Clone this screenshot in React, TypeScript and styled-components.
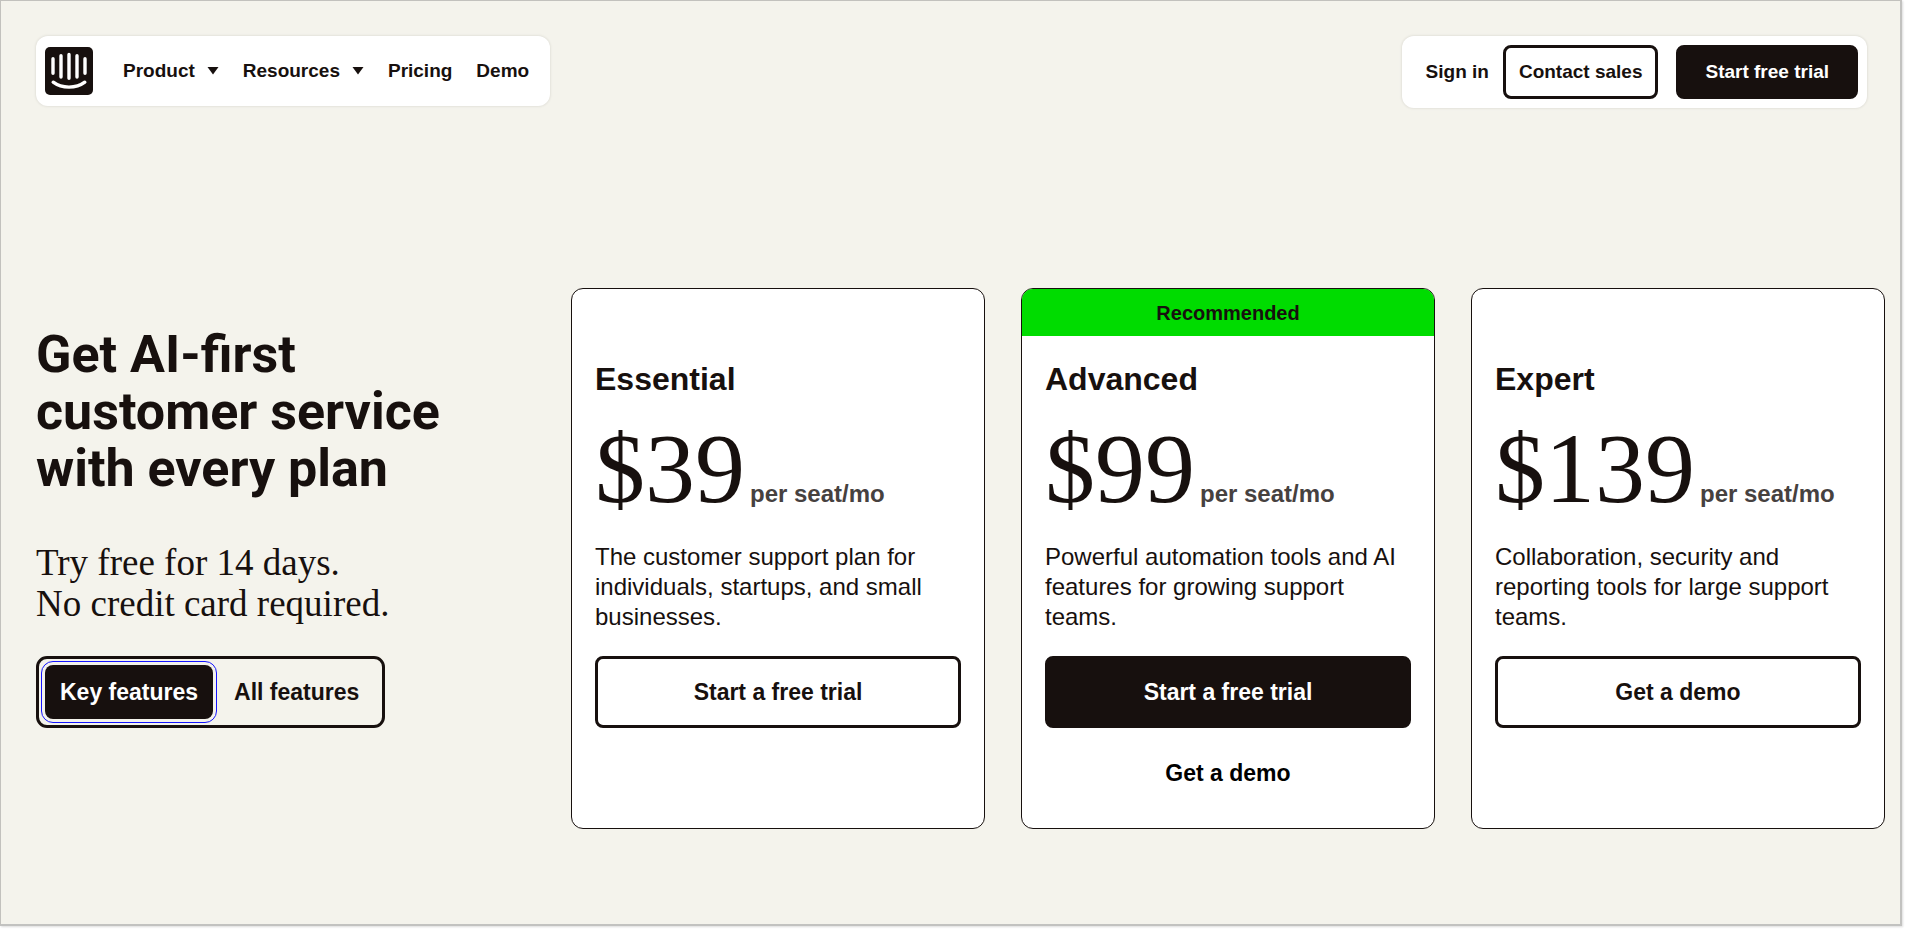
import React, { useState } from "react";
import styled, { createGlobalStyle, css } from "styled-components";

const ink = "#17100e";
const sand = "#f4f3ec";
const sans = `"Liberation Sans", Arial, Helvetica, sans-serif`;
const serif = `"Liberation Serif", "Times New Roman", serif`;

const GlobalStyle = createGlobalStyle`
  * {
    box-sizing: border-box;
  }

  body {
    margin: 0;
    background: #ffffff;
    color: ${ink};
    font-family: ${sans};
  }

  button {
    margin: 0;
    font-family: inherit;
    cursor: pointer;
  }

  h1, h2, p {
    margin: 0;
  }
`;

const Page = styled.div`
  display: flex;
  min-height: 100vh;
  padding: 0 3px 3px 0;
`;

const Frame = styled.div`
  flex: 1;
  min-width: 0;
  background: ${sand};
  border: 1px solid #c2c1bd;
  border-right: 2px solid #c2c2c0;
  border-bottom: 2px solid #c2c2c0;
  box-shadow: 1px 1px 2px #dcdcdc;
`;

const Header = styled.header`
  display: flex;
  justify-content: space-between;
  align-items: flex-start;
  padding: 35px 33px 0 35px;
`;

const panel = css`
  display: flex;
  align-items: center;
  background: #ffffff;
  border-radius: 12px;
  box-shadow: 0 0 2px 1px #e4e3dc;
`;

const MainNav = styled.nav`
  ${panel}
  height: 70px;
  padding: 0 21px 0 9px;
`;

const LogoLink = styled.a`
  display: flex;
  margin-right: 30px;
`;

const NavList = styled.ul`
  display: flex;
  gap: 24px;
  margin: 0;
  padding: 0;
  list-style: none;
`;

const navText = css`
  color: ${ink};
  font-size: 19px;
  font-weight: 700;
  line-height: 24px;
  text-decoration: none;
  white-space: nowrap;
`;

const NavLink = styled.a`
  ${navText}
  display: block;
`;

const NavMenuButton = styled.button`
  ${navText}
  display: flex;
  align-items: center;
  gap: 12px;
  padding: 0;
  border: 0;
  background: none;
`;

const Account = styled.div`
  ${panel}
  height: 72px;
  padding: 0 9px 0 24px;
`;

const HeaderButton = styled.button<{ $filled?: boolean }>`
  ${navText}
  height: 54px;
  margin-left: ${(p) => (p.$filled ? 18 : 14)}px;
  padding: 0 ${(p) => (p.$filled ? 26 : 13)}px;
  border: 3px solid ${ink};
  border-radius: 8px;
  background: ${(p) => (p.$filled ? ink : "#ffffff")};
  color: ${(p) => (p.$filled ? "#ffffff" : ink)};
`;

const Pricing = styled.main`
  display: grid;
  grid-template-columns: 499px repeat(3, minmax(0, 1fr));
  gap: 36px;
  padding: 180px 15px 36px 35px;
`;

const Intro = styled.section`
  padding-top: 38px;
`;

const Headline = styled.h1`
  font-family: Roboto, ${sans};
  font-size: 52px;
  font-weight: 700;
  line-height: 57px;
`;

const Tagline = styled.p`
  margin-top: 45px;
  font-family: ${serif};
  font-size: 37px;
  line-height: 41px;
`;

const Toggle = styled.div`
  display: inline-flex;
  margin-top: 32px;
  padding: 6px;
  border: 3px solid ${ink};
  border-radius: 11px;
`;

const ToggleButton = styled.button<{ $active: boolean }>`
  height: 54px;
  padding: ${(p) => (p.$active ? "0 15px" : "0 17px 0 21px")};
  border: 0;
  border-radius: 8px;
  background: ${(p) => (p.$active ? ink : "transparent")};
  color: ${(p) => (p.$active ? "#ffffff" : ink)};
  font-size: 23px;
  font-weight: 700;
  white-space: nowrap;
  outline: ${(p) => (p.$active ? "1px solid #1414ff" : "none")};
  outline-offset: 3px;
`;

const Card = styled.article`
  display: flex;
  flex-direction: column;
  overflow: hidden;
  background: #ffffff;
  border: 1px solid ${ink};
  border-radius: 12px;
`;

const Banner = styled.div`
  height: 47px;
  background: #00dc00;
  font-size: 20px;
  font-weight: 700;
  line-height: 48px;
  text-align: center;
`;

const CardBody = styled.div<{ $hasBanner: boolean }>`
  display: flex;
  flex-direction: column;
  padding: ${(p) => (p.$hasBanner ? 23 : 70)}px 23px 40px;
`;

const PlanName = styled.h2`
  font-size: 32px;
  font-weight: 700;
  line-height: 40px;
`;

const PriceRow = styled.div`
  display: flex;
  align-items: baseline;
  gap: 5px;
  margin-top: 20px;
`;

const Price = styled.span`
  font-family: ${serif};
  font-size: 100px;
  line-height: 100px;
`;

const Unit = styled.span`
  color: #46413f;
  font-size: 24px;
  font-weight: 700;
  line-height: 30px;
`;

const Description = styled.p`
  margin-top: 23px;
  font-size: 24px;
  line-height: 30px;
`;

const PlanButton = styled.button<{ $filled?: boolean }>`
  height: 72px;
  margin-top: 24px;
  border: 3px solid ${ink};
  border-radius: 8px;
  background: ${(p) => (p.$filled ? ink : "#ffffff")};
  color: ${(p) => (p.$filled ? "#ffffff" : ink)};
  font-size: 23px;
  font-weight: 700;
`;

const PlanLink = styled.a`
  margin-top: 30px;
  color: #000000;
  font-size: 23px;
  font-weight: 700;
  line-height: 30px;
  text-align: center;
  text-decoration: none;
`;

function Logo() {
  return (
    <svg width="48" height="48" viewBox="0 0 48 48" aria-hidden="true">
      <rect width="48" height="48" rx="5" fill={ink} />
      <g fill="none" stroke="#ffffff" strokeWidth="3.4" strokeLinecap="round">
        <path d="M8 11.7V26.3M16 8.7V30M24 7.5V31.3M32 8.7V30M40 11.7V26.3" />
        <path d="M8.2 35.2C17 41.8 31 41.8 39.8 35.2" />
      </g>
    </svg>
  );
}

function Caret() {
  return (
    <svg width="12" height="8" viewBox="0 0 12 8" aria-hidden="true">
      <path d="M0.500 0H11.500L6 7.500Z" fill={ink} />
    </svg>
  );
}

type Plan = {
  name: string;
  price: string;
  description: string;
  action: string;
  secondary?: string;
  badge?: string;
};

const plans: Plan[] = [
  {
    name: "Essential",
    price: "$39",
    description: "The customer support plan for individuals, startups, and small businesses.",
    action: "Start a free trial",
  },
  {
    name: "Advanced",
    price: "$99",
    description: "Powerful automation tools and AI features for growing support teams.",
    action: "Start a free trial",
    secondary: "Get a demo",
    badge: "Recommended",
  },
  {
    name: "Expert",
    price: "$139",
    description: "Collaboration, security and reporting tools for large support teams.",
    action: "Get a demo",
  },
];

function PlanCard({ plan }: { plan: Plan }) {
  return (
    <Card>
      {plan.badge && <Banner>{plan.badge}</Banner>}
      <CardBody $hasBanner={Boolean(plan.badge)}>
        <PlanName>{plan.name}</PlanName>
        <PriceRow>
          <Price>{plan.price}</Price>
          <Unit>per seat/mo</Unit>
        </PriceRow>
        <Description>{plan.description}</Description>
        <PlanButton type="button" $filled={Boolean(plan.badge)}>
          {plan.action}
        </PlanButton>
        {plan.secondary && <PlanLink href="#demo">{plan.secondary}</PlanLink>}
      </CardBody>
    </Card>
  );
}

const views = ["Key features", "All features"];

export default function App() {
  const [view, setView] = useState(views[0]);

  return (
    <Page>
      <GlobalStyle />
      <Frame>
        <Header>
          <MainNav>
            <LogoLink href="#home" aria-label="Home">
              <Logo />
            </LogoLink>
            <NavList>
              <li>
                <NavMenuButton type="button">
                  Product
                  <Caret />
                </NavMenuButton>
              </li>
              <li>
                <NavMenuButton type="button">
                  Resources
                  <Caret />
                </NavMenuButton>
              </li>
              <li>
                <NavLink href="#pricing">Pricing</NavLink>
              </li>
              <li>
                <NavLink href="#demo">Demo</NavLink>
              </li>
            </NavList>
          </MainNav>
          <Account>
            <NavLink href="#signin">Sign in</NavLink>
            <HeaderButton type="button">Contact sales</HeaderButton>
            <HeaderButton type="button" $filled>
              Start free trial
            </HeaderButton>
          </Account>
        </Header>
        <Pricing>
          <Intro>
            <Headline>
              Get AI-first
              <br />
              customer service
              <br />
              with every plan
            </Headline>
            <Tagline>
              Try free for 14 days.
              <br />
              No credit card required.
            </Tagline>
            <Toggle role="group" aria-label="Feature list">
              {views.map((name) => (
                <ToggleButton
                  key={name}
                  type="button"
                  aria-pressed={view === name}
                  $active={view === name}
                  onClick={() => setView(name)}
                >
                  {name}
                </ToggleButton>
              ))}
            </Toggle>
          </Intro>
          {plans.map((plan) => (
            <PlanCard key={plan.name} plan={plan} />
          ))}
        </Pricing>
      </Frame>
    </Page>
  );
}
